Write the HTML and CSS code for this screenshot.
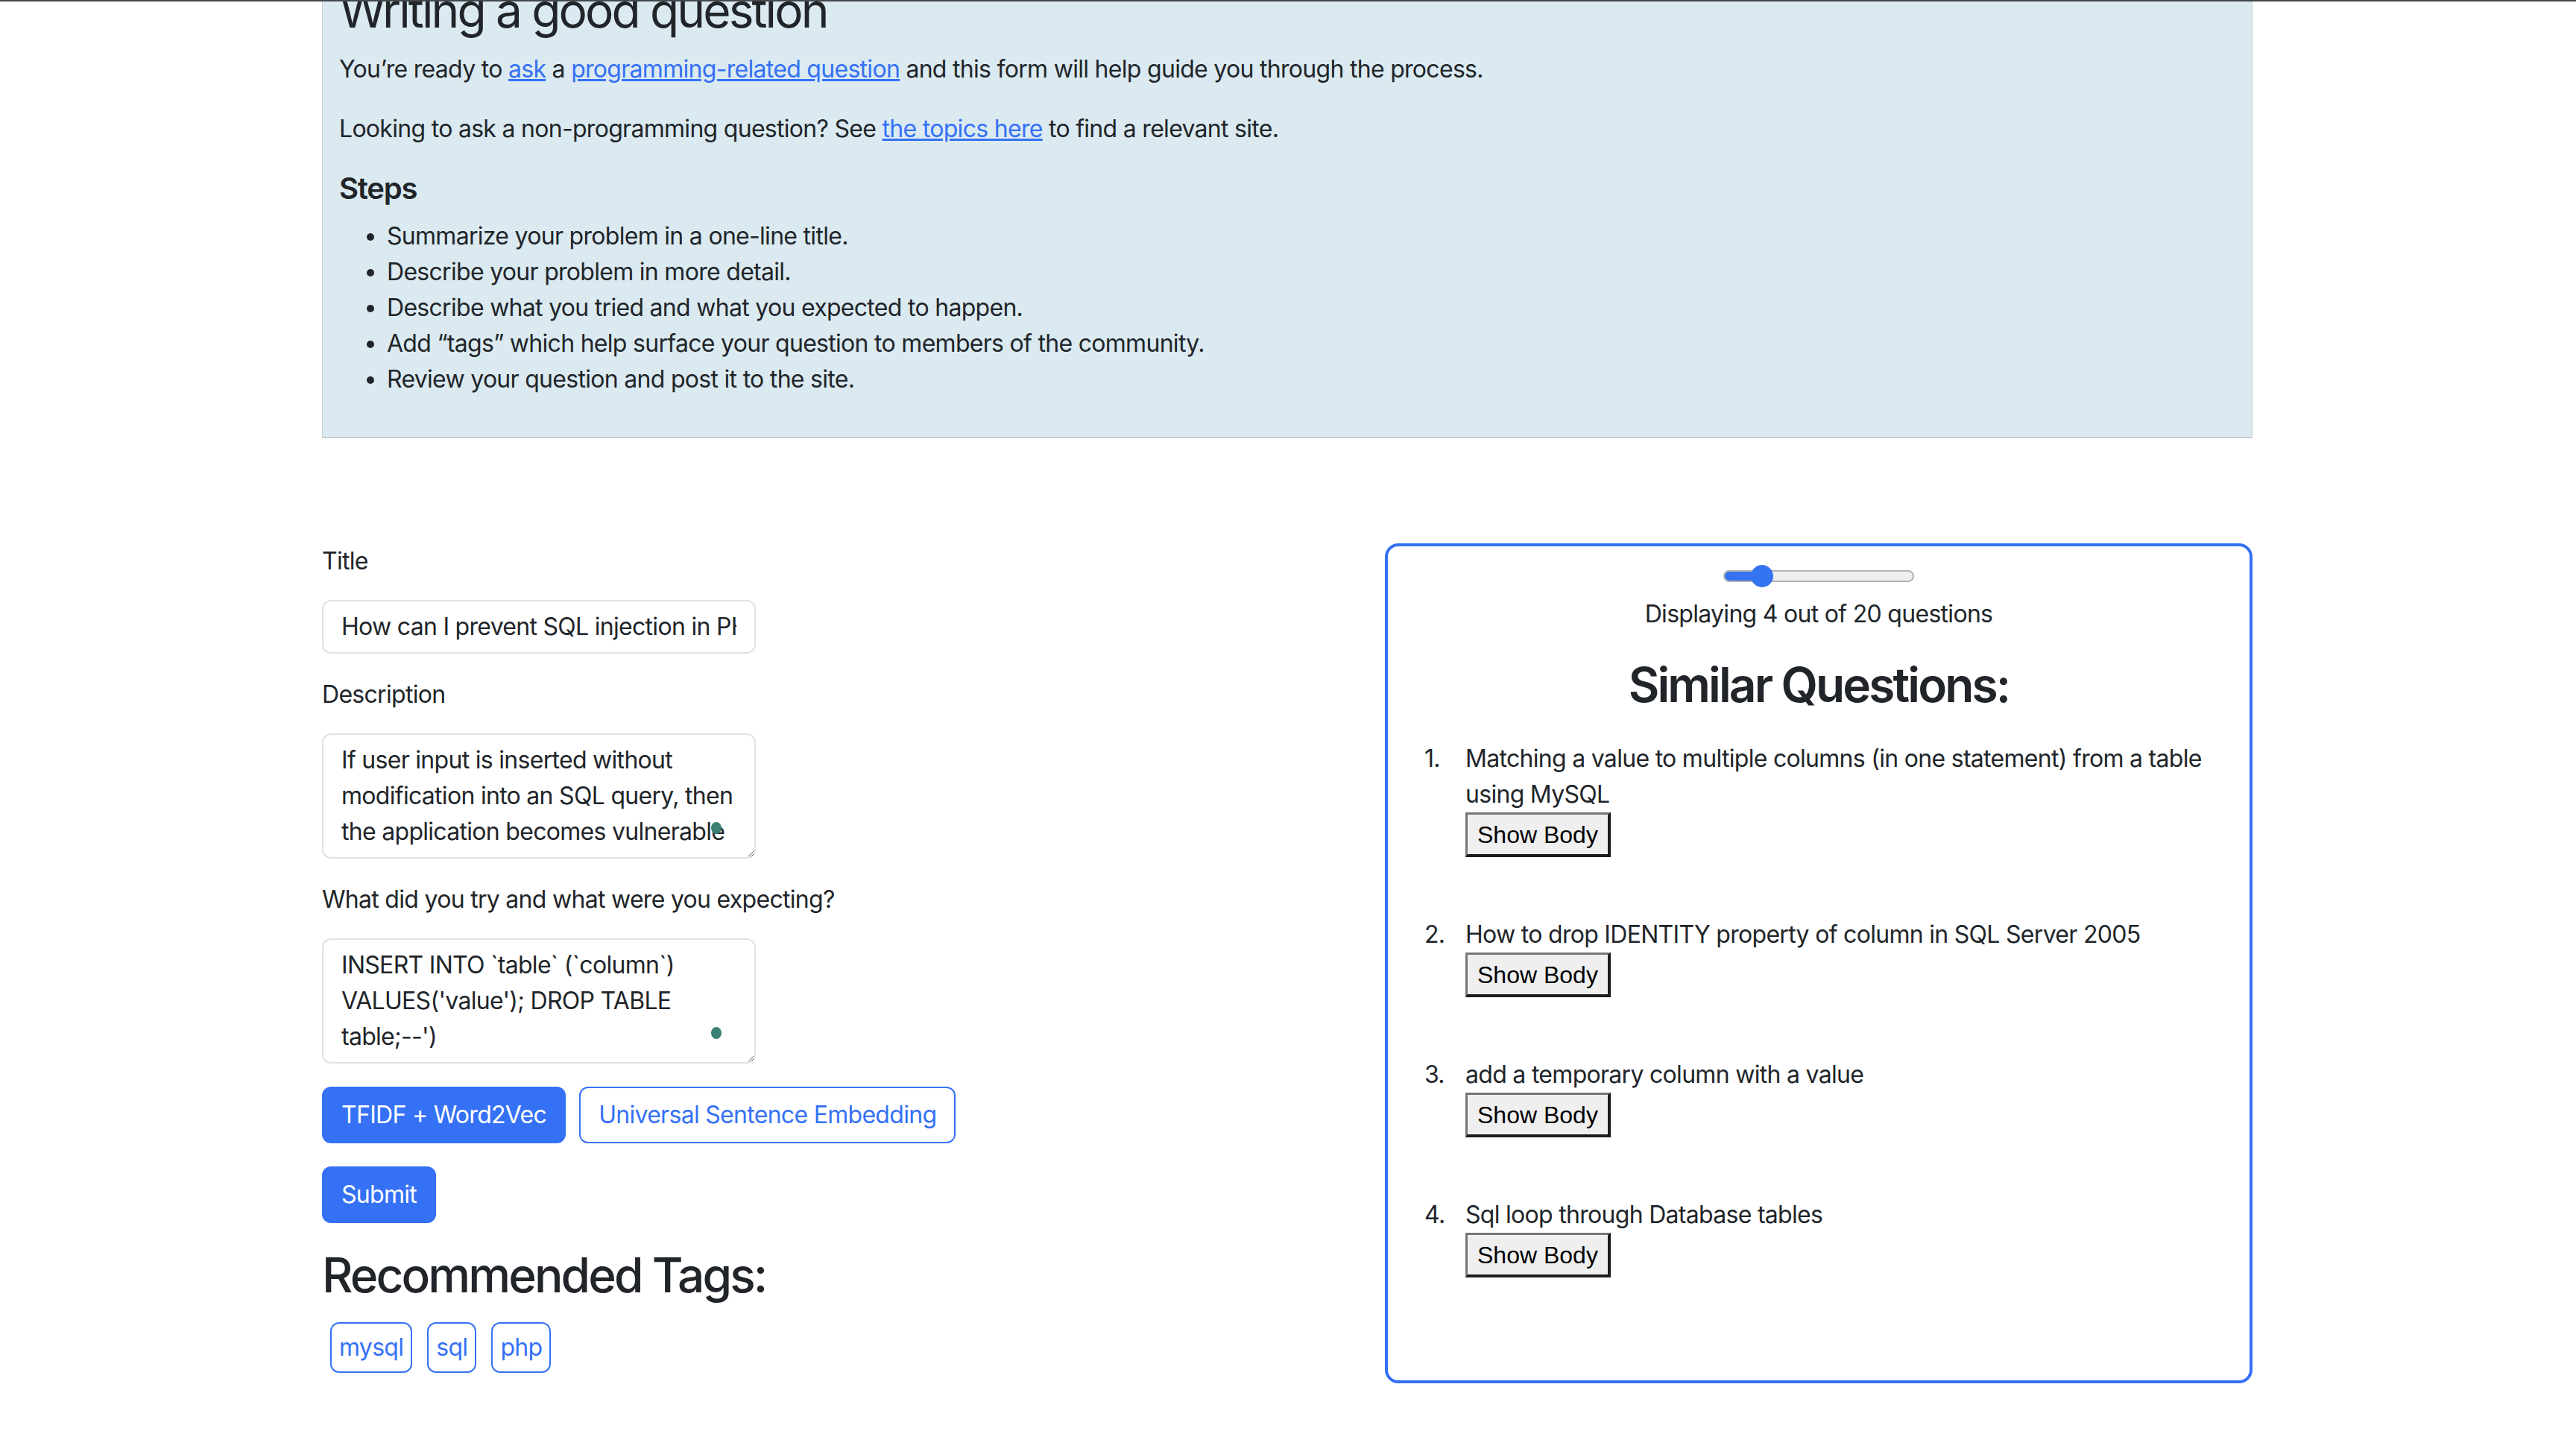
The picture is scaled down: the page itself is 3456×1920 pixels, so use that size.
FILE: index.html
```html
<!DOCTYPE html>
<html lang="en">
<head>
<meta charset="utf-8">
<title>Ask a question</title>
<link rel="stylesheet" href="styles.css">
</head>
<body>
<div class="topbar"></div>
<main class="container">
  <section class="intro">
    <h2 class="intro-title">Writing a good question</h2>
    <p>You’re ready to <a href="#">ask</a> a <a href="#">programming-related question</a> and this form will help guide you through the process.</p>
    <p>Looking to ask a non-programming question? See <a href="#">the topics here</a> to find a relevant site.</p>
    <h5 class="steps-title">Steps</h5>
    <ul class="steps">
      <li>Summarize your problem in a one-line title.</li>
      <li>Describe your problem in more detail.</li>
      <li>Describe what you tried and what you expected to happen.</li>
      <li>Add “tags” which help surface your question to members of the community.</li>
      <li>Review your question and post it to the site.</li>
    </ul>
  </section>

  <div class="main-row">
    <form class="ask-form">
      <label class="field-label" for="title">Title</label>
      <input class="field" id="title" type="text" value="How can I prevent SQL injection in PHP?">

      <label class="field-label" for="desc">Description</label>
      <div class="field-wrap">
        <textarea class="field" id="desc" rows="3">If user input is inserted without modification into an SQL query, then the application becomes vulnerable to SQL injection, like in the following example:</textarea>
        <span class="dot"></span>
      </div>

      <label class="field-label" for="tried">What did you try and what were you expecting?</label>
      <div class="field-wrap">
        <textarea class="field" id="tried" rows="3">INSERT INTO `table` (`column`) VALUES('value'); DROP TABLE table;--')</textarea>
        <span class="dot"></span>
      </div>

      <div class="algo-row">
        <button type="button" class="btn btn-primary">TFIDF + Word2Vec</button>
        <button type="button" class="btn btn-outline">Universal Sentence Embedding</button>
      </div>
      <button type="button" class="btn btn-primary submit">Submit</button>

      <h2 class="tags-title">Recommended Tags:</h2>
      <div class="tags">
        <span class="tag">mysql</span>
        <span class="tag">sql</span>
        <span class="tag">php</span>
      </div>
    </form>

    <aside class="similar-card">
      <input class="range" type="range" min="1" max="20" value="4">
      <p class="count">Displaying 4 out of 20 questions</p>
      <h2 class="similar-title">Similar Questions:</h2>
      <ol class="questions">
        <li><div class="q-body"><span class="q-title">Matching a value to multiple columns (in one statement) from a table using MySQL</span><button type="button" class="show-btn">Show Body</button></div></li>
        <li><div class="q-body"><span class="q-title">How to drop IDENTITY property of column in SQL Server 2005</span><button type="button" class="show-btn">Show Body</button></div></li>
        <li><div class="q-body"><span class="q-title">add a temporary column with a value</span><button type="button" class="show-btn">Show Body</button></div></li>
        <li><div class="q-body"><span class="q-title">Sql loop through Database tables</span><button type="button" class="show-btn">Show Body</button></div></li>
      </ol>
    </aside>
  </div>
</main>
</body>
</html>
```

FILE: styles.css
```css
* { box-sizing: border-box; }

html, body {
  margin: 0;
  background: #ffffff;
}

body {
  font-family: Inter, "Liberation Sans", sans-serif;
  font-size: 32px;
  line-height: 48px;
  letter-spacing: -0.022em;
  color: #212529;
  overflow: hidden;
}

.topbar {
  position: fixed;
  top: 0;
  left: 0;
  right: 0;
  height: 2px;
  background: #45494a;
  z-index: 10;
}

.container {
  width: 2590px;
  margin-left: 432px;
}

/* intro box */
.intro {
  margin-top: -45px;
  background: #dbeaf1;
  border: 1px solid #c7ced2;
  border-bottom-width: 2px;
  padding: 20px 22px 21px;
}

.intro-title {
  font-size: 64px;
  line-height: 76.8px;
  font-weight: 400;
  letter-spacing: -0.045em;
  margin: 0 0 16px;
}

.intro p {
  margin: 0 0 32px;
}

.intro a {
  color: #3571f5;
  text-decoration: underline;
}

.steps-title {
  font-size: 40px;
  line-height: 48px;
  font-weight: 600;
  letter-spacing: -0.03em;
  margin: 0 0 16px;
}

.steps {
  margin: 0 0 32px;
  padding-left: 64px;
}

/* main row */
.main-row {
  display: flex;
  justify-content: space-between;
  align-items: flex-start;
  margin-top: 141px;
}

.ask-form {
  flex: 1;
}

.field-label {
  display: block;
  margin-bottom: 28px;
}

.field-wrap {
  position: relative;
  width: 582px;
}

.field {
  display: block;
  width: 582px;
  margin: 0 0 31px;
  padding: 10px 24px;
  border: 2px solid #dee2e6;
  border-radius: 12px;
  font-family: inherit;
  font-size: 32px;
  line-height: 48px;
  letter-spacing: inherit;
  color: #212529;
  background: #fff;
}

textarea.field {
  height: 168px;
  overflow: hidden;
}

.dot {
  position: absolute;
  right: 46px;
  top: 119px;
  width: 14px;
  height: 16px;
  border-radius: 50%;
  background: #3a7f71;
}

.algo-row {
  display: flex;
  gap: 18px;
  margin-top: 2px;
}

.btn {
  font-family: inherit;
  font-size: 32px;
  line-height: 48px;
  letter-spacing: inherit;
  padding: 12px 24px;
  border: 2px solid #3571f5;
  border-radius: 12px;
  cursor: pointer;
}

.btn-primary {
  background: #3571f5;
  color: #ffffff;
}

.btn-outline {
  background: #ffffff;
  color: #3571f5;
}

.submit {
  display: block;
  margin-top: 31px;
}

.tags-title {
  font-size: 64px;
  line-height: 76.8px;
  font-weight: 500;
  letter-spacing: -0.045em;
  margin: 32px 0 24px;
}

.tags {
  display: flex;
  gap: 20px;
  padding-left: 11px;
}

.tag {
  border: 2px solid #3571f5;
  border-radius: 12px;
  padding: 8px 10px;
  line-height: 48px;
  color: #3571f5;
}

/* similar questions card */
.similar-card {
  width: 1164px;
  border: 4px solid #3571f5;
  border-radius: 18px;
  padding: 25px 40px 58px;
  display: flex;
  flex-direction: column;
  align-items: center;
}

.range {
  -webkit-appearance: none;
  appearance: none;
  display: block;
  width: 256px;
  height: 30px;
  margin: 0;
  background: transparent;
}

.range::-webkit-slider-runnable-track {
  height: 16px;
  border-radius: 8px;
  border: 2px solid #b3b3b3;
  background: linear-gradient(to right, #3574f0 0 50px, #efefef 50px);
}

.range::-webkit-slider-thumb {
  -webkit-appearance: none;
  appearance: none;
  width: 30px;
  height: 30px;
  border-radius: 50%;
  background: #3574f0;
  border: none;
  margin-top: -9px;
}

.count {
  margin: 12px 0 33px;
  text-align: center;
}

.similar-title {
  font-size: 64px;
  line-height: 76.8px;
  font-weight: 600;
  letter-spacing: -0.045em;
  margin: 0 0 36px;
  text-align: center;
}

.questions {
  align-self: stretch;
  list-style: none;
  counter-reset: q;
  margin: 0;
  padding: 0;
}

.questions li {
  counter-increment: q;
  display: grid;
  grid-template-columns: 64px 1fr;
  margin-bottom: 80px;
}

.questions li::before {
  content: counter(q) ".";
  padding-left: 9px;
}

.q-title {
  display: block;
}

.show-btn {
  display: inline-block;
  font-family: "Liberation Sans", Arial, sans-serif;
  font-size: 32px;
  line-height: 38px;
  letter-spacing: normal;
  padding: 8px 13px 7px;
  color: #000;
  background: #efefef;
  border-style: solid;
  border-width: 3px 4px 4px 3px;
  border-color: #767676 #1c1c1c #1c1c1c #767676;
  border-radius: 0;
}
```
